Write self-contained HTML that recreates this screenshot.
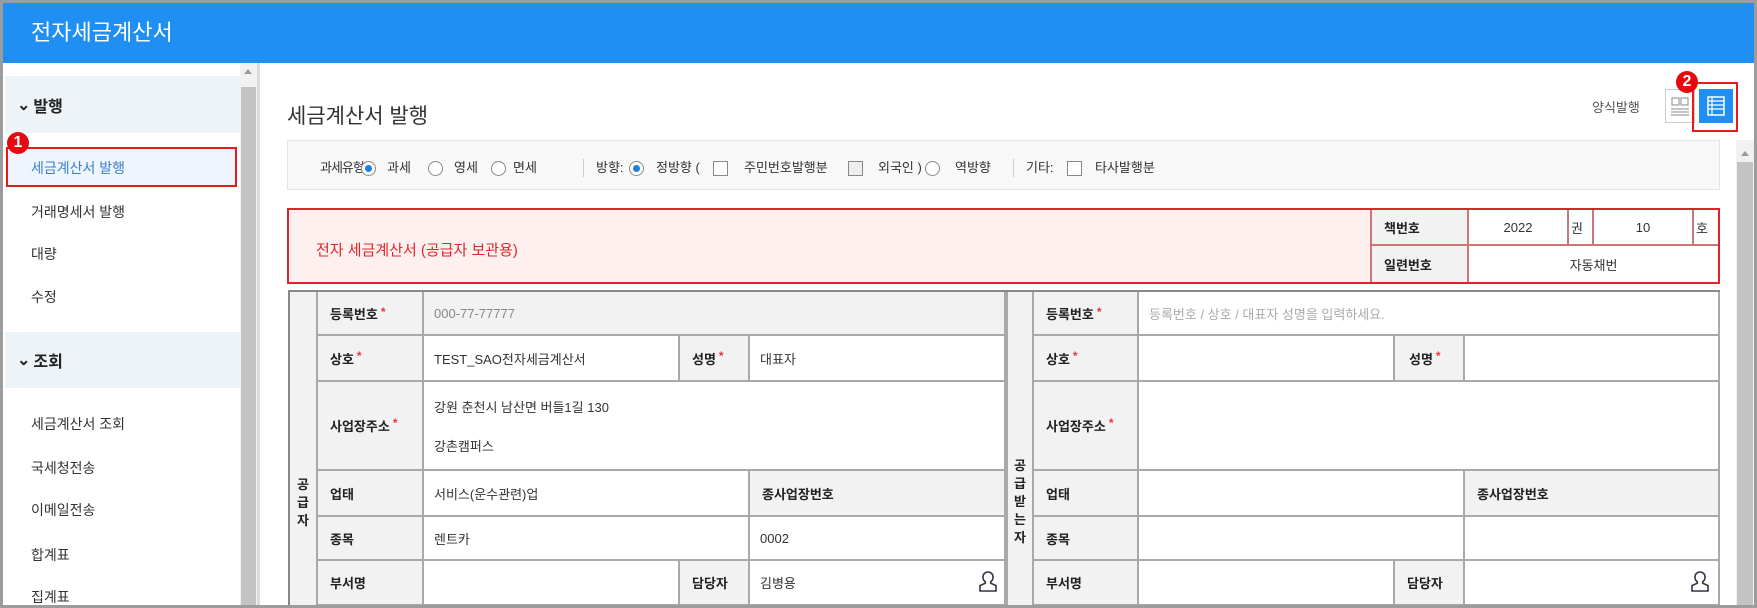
<!DOCTYPE html>
<html><head><meta charset="utf-8">
<style>
*{margin:0;padding:0;box-sizing:border-box}
body{width:1757px;height:608px;overflow:hidden;background:#9c9c9c;font-family:"Liberation Sans","Noto Sans CJK KR","NanumGothic",sans-serif;color:#222;position:relative}
.a{position:absolute}
.in{position:absolute;left:3px;top:3px;width:1751px;height:602px;background:#fff;overflow:hidden}
.hd{left:0;top:0;width:1751px;height:60px;background:#1f8ff4;color:#fff;font-size:22px;line-height:60px;padding-left:28px}
.si{font-size:14px;color:#333;left:28px}
.sec{left:2px;width:235px;background:#eef3f7;font-size:16px;font-weight:bold;color:#222;padding-left:12px;display:flex;align-items:center}
.c{position:absolute;border-right:2px solid #a9a9a9;border-bottom:2px solid #a9a9a9;font-size:13px;display:flex;align-items:center;padding-left:10px;color:#333;background:#fff}
.l{background:#f2f2f2;font-weight:bold;color:#222;padding-left:12px}
.r{color:#e33;margin-left:3px;font-size:12px;align-self:flex-start;margin-top:13px}
.rad{display:inline-block;width:15px;height:15px;border:1px solid #888;border-radius:50%;vertical-align:middle;position:relative;background:#fff}
.rad.on:after{content:"";position:absolute;left:3px;top:3px;width:7px;height:7px;border-radius:50%;background:#1e7fe0}
.chk{display:inline-block;width:15px;height:15px;border:1px solid #888;vertical-align:middle;background:#fff}
.opt{font-size:13px;color:#333;top:152px;height:26px;line-height:26px}
.badge{width:22px;height:22px;border-radius:50%;background:#e8080f;color:#fff;font-weight:bold;font-size:16px;text-align:center;line-height:22px}
.vt{justify-content:flex-start;align-items:center;flex-direction:column;padding:0;font-size:13px;line-height:18px}
</style></head><body>
<div class="in">
<div class="a hd">전자세금계산서</div>

<!-- sidebar -->
<div class="a sec" style="top:73px;height:57px">⌄<span style="margin-left:3px">발행</span></div>
<div class="a" style="left:3px;top:144px;width:231px;height:40px;background:#eef5fc;border:2px solid #e21b1b"></div>
<div class="a si" style="top:155px;color:#3a7fd0">세금계산서 발행</div>
<div class="a badge" style="left:4px;top:129px">1</div>
<div class="a si" style="top:199px">거래명세서 발행</div>
<div class="a si" style="top:241px">대량</div>
<div class="a si" style="top:284px">수정</div>
<div class="a sec" style="top:329px;height:56px">⌄<span style="margin-left:3px">조회</span></div>
<div class="a si" style="top:411px">세금계산서 조회</div>
<div class="a si" style="top:455px">국세청전송</div>
<div class="a si" style="top:497px">이메일전송</div>
<div class="a si" style="top:542px">합계표</div>
<div class="a si" style="top:584px">집계표</div>
<div class="a" style="left:237px;top:60px;width:17px;height:542px;background:#f1f1f1"></div>
<div class="a" style="left:241px;top:66px;width:0;height:0;border-left:4px solid transparent;border-right:4px solid transparent;border-bottom:5px solid #999"></div>
<div class="a" style="left:238px;top:84px;width:15px;height:520px;background:#c3c3c3"></div>
<div class="a" style="left:254px;top:60px;width:3px;height:542px;background:#ddd"></div>

<!-- content -->
<div class="a" style="left:284px;top:97px;font-size:21px;color:#333">세금계산서 발행</div>
<div class="a" style="left:1589px;top:94px;font-size:13px;color:#555">양식발행</div>
<div class="a" style="left:1662px;top:86px;width:30px;height:34px;border:1px solid #ccc;background:#fff">
<svg width="28" height="32" viewBox="0 0 28 32"><rect x="6" y="8" width="7" height="7" fill="none" stroke="#888"/><rect x="15" y="8" width="7" height="7" fill="none" stroke="#888"/><path d="M5 19h18M5 22h18M5 25h18" stroke="#888"/></svg></div>
<div class="a" style="left:1696px;top:86px;width:34px;height:34px;background:#1f8ff4">
<svg width="34" height="34" viewBox="0 0 34 34"><rect x="9" y="8" width="16" height="18" fill="none" stroke="#fff" stroke-width="1.5"/><path d="M9 12h16M9 16h16M9 20h16M13 8v18" stroke="#fff" stroke-width="1.2"/></svg></div>
<div class="a" style="left:1689px;top:79px;width:46px;height:50px;border:2px solid #e21b1b"></div>
<div class="a badge" style="left:1673px;top:68px">2</div>

<div class="a" style="left:284px;top:137px;width:1433px;height:50px;background:#f8f8f8;border:1px solid #e6e6e6"></div>
<div class="a opt" style="left:317px;letter-spacing:-1px">과세유형:</div>
<div class="a opt" style="left:358px"><span class="rad on"></span></div>
<div class="a opt" style="left:384px">과세</div>
<div class="a opt" style="left:425px"><span class="rad"></span></div>
<div class="a opt" style="left:451px">영세</div>
<div class="a opt" style="left:488px"><span class="rad"></span></div>
<div class="a opt" style="left:510px">면세</div>
<div class="a" style="left:580px;top:156px;width:1px;height:18px;background:#ccc"></div>
<div class="a opt" style="left:593px">방향:</div>
<div class="a opt" style="left:626px"><span class="rad on"></span></div>
<div class="a opt" style="left:653px">정방향 (</div>
<div class="a opt" style="left:710px"><span class="chk"></span></div>
<div class="a opt" style="left:741px">주민번호발행분</div>
<div class="a opt" style="left:845px"><span class="chk" style="background:#eee"></span></div>
<div class="a opt" style="left:875px">외국인 )</div>
<div class="a opt" style="left:922px"><span class="rad"></span></div>
<div class="a opt" style="left:952px">역방향</div>
<div class="a" style="left:1010px;top:156px;width:1px;height:18px;background:#ccc"></div>
<div class="a opt" style="left:1023px">기타:</div>
<div class="a opt" style="left:1064px"><span class="chk"></span></div>
<div class="a opt" style="left:1092px">타사발행분</div>

<div class="a" style="left:284px;top:205px;width:1433px;height:76px;background:#fff0f0;border:2px solid #d9252b"></div>
<div class="a" style="left:313px;top:236px;font-size:15px;color:#e0262c">전자 세금계산서 (공급자 보관용)</div>
<div class="a" style="left:1367px;top:207px;width:348px;height:72px;background:#fff"></div>
<div class="c l" style="left:1367px;top:207px;width:99px;height:36px;border-color:#c77;border-left:2px solid #c77">책번호</div>
<div class="c" style="left:1466px;top:207px;width:100px;height:36px;border-color:#c77;justify-content:center;padding:0">2022</div>
<div class="c" style="left:1566px;top:207px;width:25px;height:36px;border-color:#c77;padding-left:2px">권</div>
<div class="c" style="left:1591px;top:207px;width:100px;height:36px;border-color:#c77;justify-content:center;padding:0">10</div>
<div class="c" style="left:1691px;top:207px;width:24px;height:36px;border-color:#c77;border-right:none;padding-left:2px">호</div>
<div class="c l" style="left:1367px;top:243px;width:99px;height:36px;border-color:#c77;border-left:2px solid #c77;border-bottom:none">일련번호</div>
<div class="c" style="left:1466px;top:243px;width:249px;height:36px;border-color:#c77;border:none;justify-content:center;padding:0">자동채번</div>

<!-- main table -->
<div class="a" style="left:285px;top:287px;width:1432px;height:320px;border-top:2px solid #888;border-left:2px solid #888;background:#fff"></div>
<!-- left -->
<div class="c l vt" style="left:287px;top:289px;width:28px;height:330px;padding-top:184px"><span>공</span><span>급</span><span>자</span></div>
<div class="c l" style="left:315px;top:289px;width:106px;height:44px">등록번호<span class="r">*</span></div>
<div class="c" style="left:421px;top:289px;width:582px;height:44px;background:#f2f2f2;color:#888">000-77-77777</div>
<div class="c l" style="left:315px;top:333px;width:106px;height:46px">상호<span class="r">*</span></div>
<div class="c" style="left:421px;top:333px;width:256px;height:46px">TEST_SAO전자세금계산서</div>
<div class="c l" style="left:677px;top:333px;width:70px;height:46px">성명<span class="r">*</span></div>
<div class="c" style="left:747px;top:333px;width:256px;height:46px">대표자</div>
<div class="c l" style="left:315px;top:379px;width:106px;height:89px">사업장주소<span class="r" style="margin-top:34px">*</span></div>
<div class="c" style="left:421px;top:379px;width:582px;height:89px;flex-direction:column;align-items:flex-start;justify-content:center;gap:20px">
<div>강원 춘천시 남산면 버들1길 130</div><div>강촌캠퍼스</div></div>
<div class="c l" style="left:315px;top:468px;width:106px;height:46px">업태</div>
<div class="c" style="left:421px;top:468px;width:326px;height:46px">서비스(운수관련)업</div>
<div class="c l" style="left:747px;top:468px;width:256px;height:46px">종사업장번호</div>
<div class="c l" style="left:315px;top:514px;width:106px;height:44px">종목</div>
<div class="c" style="left:421px;top:514px;width:326px;height:44px">렌트카</div>
<div class="c" style="left:747px;top:514px;width:256px;height:44px">0002</div>
<div class="c l" style="left:315px;top:558px;width:106px;height:45px">부서명</div>
<div class="c" style="left:421px;top:558px;width:256px;height:45px"></div>
<div class="c l" style="left:677px;top:558px;width:70px;height:45px">담당자</div>
<div class="c" style="left:747px;top:558px;width:256px;height:45px">김병용</div>
<svg class="a" style="left:974px;top:567px" width="22" height="23" viewBox="0 0 22 23"><path d="M11 2c-3 0-5 2.2-5 5.2 0 2 .9 3.6 2.3 4.6v1.4L3 15.5V21h16v-5.5l-5.3-2.3v-1.4c1.4-1 2.3-2.6 2.3-4.6C16 4.2 14 2 11 2z" fill="none" stroke="#334" stroke-width="1.6"/></svg>
<!-- right -->
<div class="c l vt" style="left:1003px;top:289px;width:28px;height:330px;padding-top:165px;border-left:2px solid #a9a9a9"><span>공</span><span>급</span><span>받</span><span>는</span><span>자</span></div>
<div class="c l" style="left:1031px;top:289px;width:105px;height:44px">등록번호<span class="r">*</span></div>
<div class="c" style="left:1136px;top:289px;width:581px;height:44px;color:#aaa">등록번호 / 상호 / 대표자 성명을 입력하세요.</div>
<div class="c l" style="left:1031px;top:333px;width:105px;height:46px">상호<span class="r">*</span></div>
<div class="c" style="left:1136px;top:333px;width:256px;height:46px"></div>
<div class="c l" style="left:1392px;top:333px;width:70px;height:46px;padding-left:14px">성명<span class="r">*</span></div>
<div class="c" style="left:1462px;top:333px;width:255px;height:46px"></div>
<div class="c l" style="left:1031px;top:379px;width:105px;height:89px">사업장주소<span class="r" style="margin-top:34px">*</span></div>
<div class="c" style="left:1136px;top:379px;width:581px;height:89px"></div>
<div class="c l" style="left:1031px;top:468px;width:105px;height:46px">업태</div>
<div class="c" style="left:1136px;top:468px;width:326px;height:46px"></div>
<div class="c l" style="left:1462px;top:468px;width:255px;height:46px">종사업장번호</div>
<div class="c l" style="left:1031px;top:514px;width:105px;height:44px">종목</div>
<div class="c" style="left:1136px;top:514px;width:326px;height:44px"></div>
<div class="c" style="left:1462px;top:514px;width:255px;height:44px"></div>
<div class="c l" style="left:1031px;top:558px;width:105px;height:45px">부서명</div>
<div class="c" style="left:1136px;top:558px;width:256px;height:45px"></div>
<div class="c l" style="left:1392px;top:558px;width:70px;height:45px">담당자</div>
<div class="c" style="left:1462px;top:558px;width:255px;height:45px"></div>
<svg class="a" style="left:1686px;top:567px" width="22" height="23" viewBox="0 0 22 23"><path d="M11 2c-3 0-5 2.2-5 5.2 0 2 .9 3.6 2.3 4.6v1.4L3 15.5V21h16v-5.5l-5.3-2.3v-1.4c1.4-1 2.3-2.6 2.3-4.6C16 4.2 14 2 11 2z" fill="none" stroke="#334" stroke-width="1.6"/></svg>
<div class="a" style="left:287px;top:603px;width:1430px;height:3px;background:#f2f2f2"></div>

<!-- right scrollbar -->
<div class="a" style="left:1733px;top:137px;width:18px;height:470px;background:#f1f1f1"></div>
<div class="a" style="left:1738px;top:148px;width:0;height:0;border-left:4px solid transparent;border-right:4px solid transparent;border-bottom:5px solid #999"></div>
<div class="a" style="left:1734px;top:159px;width:16px;height:450px;background:#c3c3c3"></div>
</div>
</body></html>
